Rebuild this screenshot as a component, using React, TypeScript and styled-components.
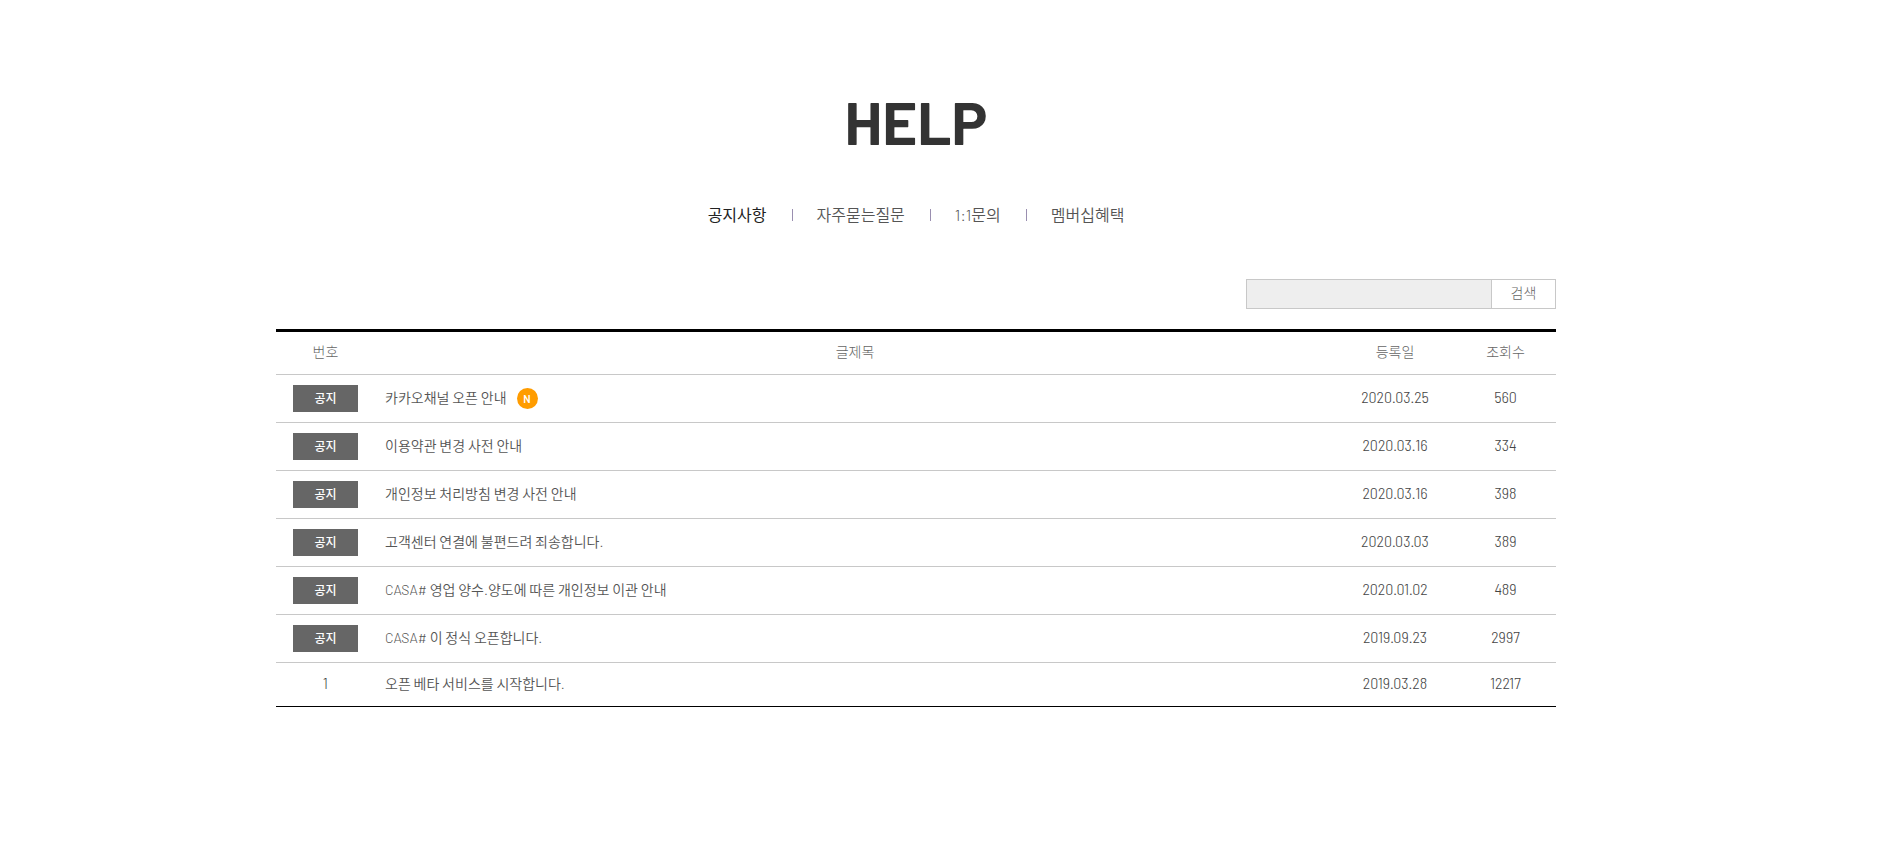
import React from 'react';
import styled, { createGlobalStyle } from 'styled-components';

const GlobalStyle = createGlobalStyle`
  *, *::before, *::after { box-sizing: border-box; }
  body {
    margin: 0;
    background: #fff;
    color: #555;
    font-family: Barlow, 'Noto Sans CJK KR', sans-serif;
    font-size: 14px;
    font-weight: 350;
    line-height: 20px;
  }
`;

const Page = styled.main`
  padding: 85px 48px 80px 0;
`;

const Container = styled.div`
  max-width: 1280px;
  margin: 0 auto;
`;

const Title = styled.h1`
  margin: 0;
  color: #333;
  font-size: 60px;
  font-weight: 700;
  line-height: 72px;
  text-align: center;
`;

const Tabs = styled.ul`
  display: flex;
  justify-content: center;
  margin: 46px 0 0;
  padding: 0;
  list-style: none;
`;

const Tab = styled.li`
  display: flex;
  align-items: center;

  & + &::before {
    content: '';
    width: 1px;
    height: 12px;
    margin: 0 24px 0 25px;
    background: #9a8fb0;
  }
`;

const TabLink = styled.a<{ $active?: boolean }>`
  color: ${(p) => (p.$active ? '#222' : '#555')};
  font-size: 16px;
  font-weight: ${(p) => (p.$active ? 400 : 350)};
  line-height: 24px;
  text-decoration: none;
`;

const SearchForm = styled.form`
  display: flex;
  justify-content: flex-end;
  margin: 52px 0 20px;
`;

const SearchInput = styled.input`
  width: 245px;
  height: 30px;
  padding: 0 10px;
  border: 1px solid #c8c8c8;
  border-right: 0;
  border-radius: 0;
  background: #eee;
  font: inherit;
`;

const SearchButton = styled.button`
  width: 65px;
  height: 30px;
  padding: 0 0 2px;
  border: 1px solid #c8c8c8;
  background: #fff;
  color: #666;
  font: inherit;
  font-weight: 300;
  cursor: pointer;
`;

const Table = styled.table`
  width: 100%;
  border-top: 3px solid #000;
  border-bottom: 1px solid #000;
  border-spacing: 0;
  table-layout: fixed;
`;

const Col = styled.col<{ $width?: number }>`
  width: ${(p) => (p.$width ? `${p.$width}px` : 'auto')};
`;

const HeadCell = styled.th`
  height: 42px;
  padding: 0 0 2px;
  color: #666;
  font-weight: 300;
  text-align: center;
`;

const Cell = styled.td`
  height: 44px;
  padding: 0;
  border-top: 1px solid #c8c8c8;
  text-align: center;
`;

const NoticeRow = styled.tr`
  ${Cell} { height: 48px; }
`;

const TitleCell = styled(Cell)`
  padding: 0 10px 1px;
  text-align: left;
`;

const NumberCell = styled(Cell)`
  padding-bottom: 4px;
  color: #444;
  font-family: 'Barlow Semi Condensed', 'Roboto Condensed', sans-serif;
  font-size: 16px;
  font-weight: 300;
`;

const Badge = styled.span`
  display: block;
  width: 65px;
  margin: 0 auto;
  background: #666;
  color: #fff;
  font-size: 12px;
  font-weight: 500;
  line-height: 27px;
`;

const PostLink = styled.a`
  display: inline-flex;
  align-items: center;
  gap: 10px;
  color: inherit;
  text-decoration: none;
`;

const NewMark = styled.span`
  width: 21px;
  height: 21px;
  border-radius: 50%;
  background: #ff9c00;
  color: #fff;
  font-size: 11px;
  font-weight: 600;
  line-height: 21px;
  text-align: center;
`;

type Post = { no?: number; title: string; date: string; views: number; isNew?: boolean };

const tabs = ['공지사항', '자주묻는질문', '1:1문의', '멤버십혜택'];

const posts: Post[] = [
  { title: '카카오채널 오픈 안내', date: '2020.03.25', views: 560, isNew: true },
  { title: '이용약관 변경 사전 안내', date: '2020.03.16', views: 334 },
  { title: '개인정보 처리방침 변경 사전 안내', date: '2020.03.16', views: 398 },
  { title: '고객센터 연결에 불편드려 죄송합니다.', date: '2020.03.03', views: 389 },
  { title: 'CASA# 영업 양수.양도에 따른 개인정보 이관 안내', date: '2020.01.02', views: 489 },
  { title: 'CASA# 이 정식 오픈합니다.', date: '2019.09.23', views: 2997 },
  { no: 1, title: '오픈 베타 서비스를 시작합니다.', date: '2019.03.28', views: 12217 },
];

function PostRow({ post }: { post: Post }) {
  const Row = post.no ? 'tr' : NoticeRow;
  return (
    <Row>
      {post.no ? <NumberCell>{post.no}</NumberCell> : <Cell><Badge>공지</Badge></Cell>}
      <TitleCell>
        <PostLink href="#">
          {post.title}
          {post.isNew && <NewMark>N</NewMark>}
        </PostLink>
      </TitleCell>
      <NumberCell>{post.date}</NumberCell>
      <NumberCell>{post.views}</NumberCell>
    </Row>
  );
}

export default function App() {
  return (
    <>
      <GlobalStyle />
      <Page>
        <Container>
          <Title>HELP</Title>
          <nav>
            <Tabs>
              {tabs.map((label, i) => (
                <Tab key={label}>
                  <TabLink href="#" $active={i === 0} aria-current={i === 0 ? 'page' : undefined}>
                    {label}
                  </TabLink>
                </Tab>
              ))}
            </Tabs>
          </nav>
          <SearchForm role="search" onSubmit={(e) => e.preventDefault()}>
            <SearchInput type="text" aria-label="검색어" />
            <SearchButton type="submit">검색</SearchButton>
          </SearchForm>
          <Table>
            <colgroup>
              <Col $width={99} />
              <Col />
              <Col $width={120} />
              <Col $width={101} />
            </colgroup>
            <thead>
              <tr>
                <HeadCell scope="col">번호</HeadCell>
                <HeadCell scope="col">글제목</HeadCell>
                <HeadCell scope="col">등록일</HeadCell>
                <HeadCell scope="col">조회수</HeadCell>
              </tr>
            </thead>
            <tbody>
              {posts.map((post) => (
                <PostRow key={post.title} post={post} />
              ))}
            </tbody>
          </Table>
        </Container>
      </Page>
    </>
  );
}
